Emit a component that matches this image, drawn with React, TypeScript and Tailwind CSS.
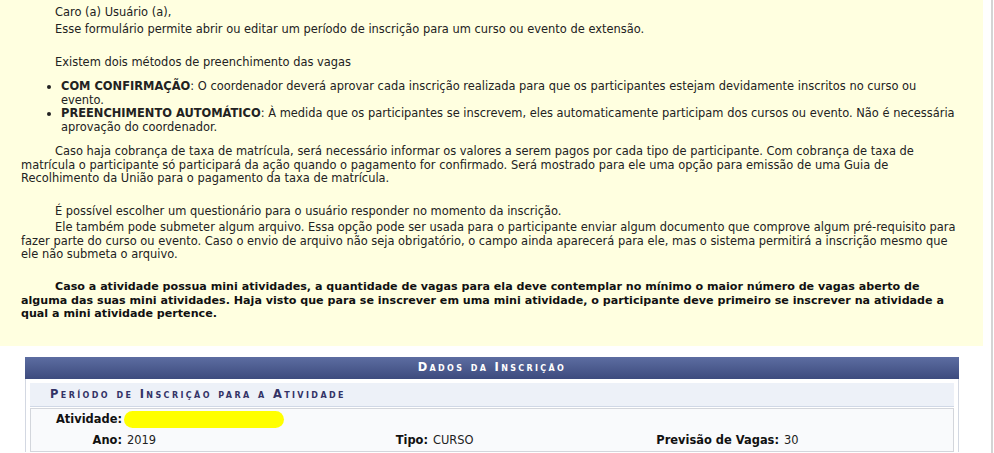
const label = "text-right pr-[2px] font-bold text-[#111]";
const value = "pl-[3px] text-[#222]";

const App = () => {
  return (
    <div className="flex h-[453px] w-[994px] overflow-hidden bg-white font-['DejaVu_Sans',Verdana,sans-serif] text-[11.45px] leading-[13.5px] text-[#222]">
      <div className="w-[983px]">
        {/* instruções */}
        <div className="bg-[#FFFFE0] pb-[25.5px] pl-[21px] pr-[26px] pt-[6px]">
          <p className="indent-[34px]">Caro (a) Usuário (a),</p>
          <p className="mt-[3.5px] indent-[34px]">
            Esse formulário permite abrir ou editar um período de inscrição para
            um curso ou evento de extensão.
          </p>
          <p className="mt-[19.5px] indent-[34px]">
            Existem dois métodos de preenchimento das vagas
          </p>
          <ul className="mt-[10.5px] list-disc pl-[40px]">
            <li>
              <b>COM CONFIRMAÇÃO</b>: O coordenador deverá aprovar cada inscrição
              realizada para que os participantes estejam devidamente inscritos no
              curso ou evento.
            </li>
            <li>
              <b>PREENCHIMENTO AUTOMÁTICO</b>: À medida que os participantes se
              inscrevem, eles automaticamente participam dos cursos ou evento. Não
              é necessária aprovação do coordenador.
            </li>
          </ul>
          <p className="mt-[11px] indent-[34px]">
            Caso haja cobrança de taxa de matrícula, será necessário informar os
            valores a serem pagos por cada tipo de participante. Com cobrança de
            taxa de matrícula o participante só participará da ação quando o
            pagamento for confirmado. Será mostrado para ele uma opção para
            emissão de uma Guia de Recolhimento da União para o pagamento da taxa
            de matrícula.
          </p>
          <p className="mt-[19.5px] indent-[34px]">
            É possível escolher um questionário para o usuário responder no
            momento da inscrição.
          </p>
          <p className="mt-[2.5px] indent-[34px]">
            Ele também pode submeter algum arquivo. Essa opção pode ser usada
            para o participante enviar algum documento que comprove algum
            pré-requisito para fazer parte do curso ou evento. Caso o envio de
            arquivo não seja obrigatório, o campo ainda aparecerá para ele, mas o
            sistema permitirá a inscrição mesmo que ele não submeta o arquivo.
          </p>
          <p className="mt-[18.5px] indent-[34px] text-[11.12px] font-bold text-[#111]">
            Caso a atividade possua mini atividades, a quantidade de vagas para
            ela deve contemplar no mínimo o maior número de vagas aberto de alguma
            das suas mini atividades. Haja visto que para se inscrever em uma mini
            atividade, o participante deve primeiro se inscrever na atividade a
            qual a mini atividade pertence.
          </p>
        </div>

        {/* formulário */}
        <div className="ml-[25px] mt-[11px] w-[934px]">
          <div className="flex h-[22px] items-center justify-center bg-gradient-to-b from-[#5D6DA1] to-[#3D4B7E] font-bold tracking-[2.35px] text-white [font-variant:small-caps]">
            Dados da Inscrição
          </div>
          <div className="border-x border-[#D3D8E2] px-[4px] pt-[4px]">
            <div className="flex h-[24px] items-center border-b border-[#D0D8E6] bg-[#EDF1F8] pl-[20px] font-bold tracking-[2.4px] text-[#333366] [font-variant:small-caps]">
              Período de Inscrição para a Atividade
            </div>
            <div className="mt-[1px] grid grid-cols-[93px_200px_106px_200px_151px_1fr] border border-[#D3D6DC] bg-[#F9FAFC]">
              <div className={`${label} flex h-[21px] items-center justify-end`}>Atividade:</div>
              <div className="col-span-5 flex h-[21px] items-center">
                <span className="h-[17px] w-[160px] rounded-full bg-[#FFFF00]" />
              </div>
              <div className={`${label} flex h-[21px] items-center justify-end`}>Ano:</div>
              <div className={`${value} flex h-[21px] items-center`}>2019</div>
              <div className={`${label} flex h-[21px] items-center justify-end`}>Tipo:</div>
              <div className={`${value} flex h-[21px] items-center`}>CURSO</div>
              <div className={`${label} flex h-[21px] items-center justify-end`}>Previsão de Vagas:</div>
              <div className={`${value} flex h-[21px] items-center`}>30</div>
            </div>
          </div>
        </div>
      </div>
      <div className="ml-[8px] w-[2px] bg-[#D4D4D4]" />
    </div>
  );
};

export default App;
